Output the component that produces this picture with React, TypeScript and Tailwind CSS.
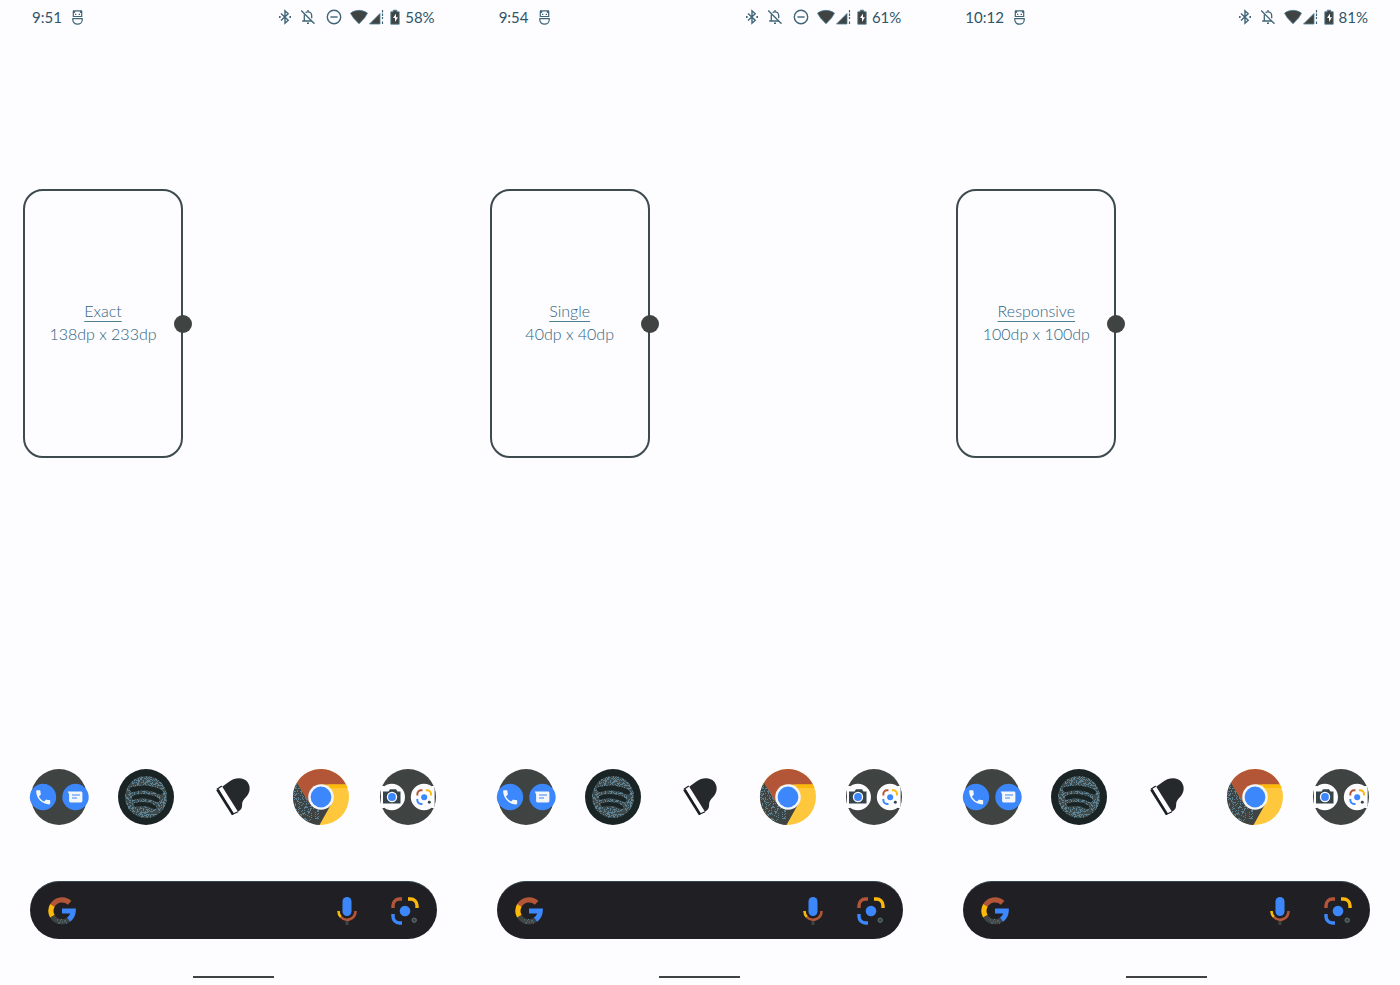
import React from "react";

type Phone = { time: string; battery: string; dnd: boolean; mode: string; size: string };

const phones: Phone[] = [
  { time: "9:51", battery: "58%", dnd: true, mode: "Exact", size: "138dp x 233dp" },
  { time: "9:54", battery: "61%", dnd: true, mode: "Single", size: "40dp x 40dp" },
  { time: "10:12", battery: "81%", dnd: false, mode: "Responsive", size: "100dp x 100dp" },
];

const inkBlue = "#4f7f95";
const ink = "#3f4341";

/* Speckle of single-unit squares inside a box, the same on every render. */
function speckle(x: number, y: number, w: number, h: number, density: number) {
  let seed = 7;
  let d = "";
  for (let j = 0; j < h; j++) {
    for (let i = 0; i < w; i++) {
      seed = (seed * 1103515245 + 12345) % 2147483648;
      if (seed / 2147483648 < density) d += `M${x + i} ${y + j}h1v1h-1z`;
    }
  }
  return d;
}
const spotifyGrain = speckle(7, 7, 42, 42, 0.4);
const chromeGrain = speckle(0, 14, 26, 38, 0.25);

function AndroidIcon() {
  return (
    <svg className="h-[15px] w-[11px]" viewBox="0 0 11 15" fill="none" stroke="#3f6577" strokeWidth="1.2" aria-hidden="true">
      <path d="M1 .8h9M1.300 1V6.500h8.400V1M1.500 1l1.500 1.500M9.500 1L8 2.500" />
      <path d="M3 4.300h1.300M6.700 4.300H8" />
      <path d="M.8 8.700h9.400v1.400a4.700 4.100 0 0 1-9.400 0z" />
    </svg>
  );
}

function BluetoothIcon() {
  return (
    <svg className="h-4 w-3.5" viewBox="0 0 14 16" fill="none" stroke="#3f6577" strokeWidth="1.4" aria-hidden="true">
      <path d="M3 4.500l7.200 6.800L7 14.200V1.800l3.200 2.900L3 11.500" />
      <path d="M1 8h1.600M11.400 8H13" strokeWidth="1.800" />
    </svg>
  );
}

function BellOffIcon() {
  return (
    <svg className="size-4" viewBox="0 0 16 16" fill="none" stroke="#3f6577" strokeWidth="1.3" aria-hidden="true">
      <path d="M1.200 1.500l13.300 13.300" />
      <path d="M4.300 5.600V11.800M2.200 12h9.600" />
      <path d="M5.600 3.600c1-.9 1.600-.8 2.400-.8 2.300 0 3.700 1.700 3.700 3.900v2.600M8 1v2" />
      <path d="M7 14.300h2" strokeWidth="1.600" />
    </svg>
  );
}

function DndIcon() {
  return (
    <svg className="size-4" viewBox="0 0 16 16" fill="none" stroke="#3f6577" strokeWidth="1.4" aria-hidden="true">
      <circle cx="8" cy="8" r="6.700" />
      <path d="M4.400 8h7.200" />
    </svg>
  );
}

function SignalIcons() {
  return (
    <svg className="h-4 w-[50px]" viewBox="0 0 50 16" fill={ink} stroke={inkBlue} strokeWidth=".8" aria-hidden="true">
      <path d="M.5 4.200C5.500.4 12.500.4 17.500 4.200L14.500 9 9 14.800 3.500 9z" />
      <path d="M19.500 15L30 4.500V15z" />
      <path d="M32.500 1v9M32.500 12.500v2.500" stroke="#3f6577" strokeWidth="1.200" strokeDasharray="2.500 1" />
      <path d="M40.800 2.800h2.400V1.200h3.600v1.600h2.400V15.200h-8.400z" />
      <path d="M46 4.500l-3 4.500h2v4l3-4.800h-2z" fill="#fdfcff" stroke="none" />
    </svg>
  );
}

function StatusBar({ phone }: { phone: Phone }) {
  return (
    <header className="flex h-[34px] items-center justify-between px-8 text-[15px] leading-5 text-[#2f5568]">
      <div className="flex items-center gap-2.5">
        <time>{phone.time}</time>
        <AndroidIcon />
      </div>
      <div className="flex items-center gap-2">
        <BluetoothIcon />
        <BellOffIcon />
        {phone.dnd && <span className="pl-0.5"><DndIcon /></span>}
        <div className="flex items-center gap-[5px]">
          <SignalIcons />
          <span>{phone.battery}</span>
        </div>
      </div>
    </header>
  );
}

function LensMarks() {
  return (
    <>
      <g fill="none" strokeWidth="3.400">
        <path d="M2 11V8.500A6.500 6.500 0 0 1 8.500 2H11" stroke="#b35638" />
        <path d="M17 2h2.500A6.500 6.500 0 0 1 26 8.500V11" stroke="#fdb90a" />
        <path d="M2 17v2.500A6.500 6.500 0 0 0 8.500 26H11" stroke="#3b87fb" />
      </g>
      <circle cx="14" cy="14" r="5.300" fill="#3b87fb" />
    </>
  );
}

function CommsFolder() {
  return (
    <svg className="h-14 w-[60px]" viewBox="0 0 60 56" aria-hidden="true">
      <circle cx="30" cy="28" r="28" fill={ink} />
      <circle cx="14" cy="28" r="13.200" fill="#3b87fb" />
      <circle cx="46.500" cy="28" r="13.200" fill="#3b87fb" />
      <path
        transform="translate(4.800 19) scale(.78)"
        fill="#f4f6f8"
        d="M6.620 10.790c1.440 2.830 3.760 5.140 6.590 6.590l2.200-2.200c.27-.27.67-.36 1.020-.24 1.120.37 2.330.57 3.570.57.55 0 1 .45 1 1V20c0 .55-.45 1-1 1C10.610 21 3 13.390 3 4c0-.55.45-1 1-1h3.500c.55 0 1 .45 1 1 0 1.250.2 2.450.57 3.570.11.35.03.74-.25 1.020z"
      />
      <path d="M38.800 22.500h13.200a1.400 1.400 0 0 1 1.400 1.400v8.200a1.400 1.400 0 0 1-1.400 1.400H41.500a1.400 1.400 0 0 1-1.400-1.400v-6.600z" fill="#f4f6f8" />
      <path d="M43 26h8M43 29h5" stroke="#3b87fb" strokeWidth="1.100" />
    </svg>
  );
}

function SpotifyLogo() {
  return (
    <svg className="h-14 w-[60px]" viewBox="-2 0 60 56" aria-hidden="true">
      <defs>
        <clipPath id="spotify-disc"><circle cx="28" cy="28" r="21" /></clipPath>
      </defs>
      <circle cx="28" cy="28" r="28" fill="#1a2424" />
      <circle cx="28" cy="28" r="21" fill="#424b4c" />
      <path d={spotifyGrain} fill="#5b8294" clipPath="url(#spotify-disc)" shapeRendering="crispEdges" />
      <g fill="none" stroke="#1a2424" strokeLinecap="round">
        <path d="M14.500 20.500c9-2.500 19.500-1.800 28 2.700" strokeWidth="5" />
        <path d="M16 28.500c8-2.200 16.500-1.300 23.500 2.600" strokeWidth="4.400" />
        <path d="M17.500 35.800c7-1.600 13.500-.8 19 2.400" strokeWidth="3.800" />
      </g>
    </svg>
  );
}

function PianoLogo() {
  return (
    <svg className="h-14 w-[60px]" viewBox="-1 1 60 56" aria-hidden="true">
      <path d="M13 22.500L24 14.500c6-5 15-6 19.500-.5 3.500 5 2.500 10.500-1 14.500-3.200 3.200-4.500 5-4.400 8.500.1 3.700-1.600 6-8.200 8.700z" fill="#25292c" />
      <path d="M14.500 20.800l3.600-2.400L34 43.800l-4 2.600z" fill="#fdfcff" />
      <path d="M13.300 21.500l15.700 25" stroke="#1a2022" strokeWidth="2.600" />
      <path d="M12.800 21.300l5-3.200M28 46.500l6-2.800" stroke="#1a2022" strokeWidth="1.200" />
    </svg>
  );
}

function ChromeLogo() {
  return (
    <svg className="h-14 w-[60px]" viewBox="-3 0 60 56" aria-hidden="true">
      <defs>
        <clipPath id="chrome-green"><path d="M4 13.500A28 28 0 0 0 26.500 56L38.800 34 28 28 15.700 33z" /></clipPath>
      </defs>
      <circle cx="28" cy="28" r="28" fill="#ffc83c" />
      <path d="M28 28L15.700 33 4 13.500A28 28 0 0 1 53 15.500H28z" fill="#b35638" />
      <path d="M4 13.500A28 28 0 0 0 26.500 56L38.800 34 28 28 15.700 33z" fill={ink} />
      <path d={chromeGrain} fill="#5b8294" clipPath="url(#chrome-green)" shapeRendering="crispEdges" />
      <path d="M35 15.500h18l1.600 3.500H37z" fill="#fdb90a" />
      <circle cx="28" cy="28" r="12.800" fill="#f3f5f7" />
      <circle cx="28" cy="28" r="10.400" fill="#3b87fb" />
    </svg>
  );
}

function CameraFolder() {
  return (
    <svg className="h-14 w-[60px]" viewBox="0 0 60 56" aria-hidden="true">
      <defs>
        <clipPath id="camera-folder"><rect x="3" y="0" width="53.500" height="56" /></clipPath>
      </defs>
      <circle cx="30" cy="28" r="28" fill={ink} />
      <g clipPath="url(#camera-folder)">
        <rect x="3" y="17" width="3" height="22" fill="#fdfcff" />
        <rect x="53.500" y="17" width="3" height="22" fill="#fdfcff" />
        <circle cx="13.800" cy="28" r="13.200" fill="#fdfcff" />
        <circle cx="46" cy="28" r="13.200" fill="#fdfcff" />
      </g>
      <path d="M6.500 22.500h4l1.500-2.300h6l1.500 2.300h3v12H5V22.500z" fill="#36444a" />
      <circle cx="14" cy="28" r="5.200" fill="#fdfcff" />
      <circle cx="14" cy="28" r="3.900" fill="#3b87fb" />
      <g transform="translate(38.200 20.200) scale(.57)">
        <LensMarks />
        <circle cx="23" cy="23" r="2.600" fill="#36444a" />
      </g>
    </svg>
  );
}

function GoogleLogo() {
  return (
    <svg className="size-7" viewBox="0 0 28 28" fill="none" strokeWidth="5.200" aria-hidden="true">
      <path d="M4.300 8.600A11.200 11.200 0 0 1 21.600 5.800" stroke="#b35638" />
      <path d="M4.400 19.400A11.200 11.200 0 0 1 4.400 8.400" stroke="#fdb90a" />
      <path d="M4.300 19.200A11.200 11.200 0 0 0 20.500 22.700" stroke={ink} />
      <path d="M14 14h11.200A11.200 11.200 0 0 1 20.500 22.700" stroke="#3b87fb" />
      <path d="M9 23h1M12 24h1M10 26h2M14 25h1M16 24h2M18 26h1M13 22.500h1" stroke="#5b8294" strokeWidth="1" />
    </svg>
  );
}

function MicLogo() {
  return (
    <svg className="h-7 w-5" viewBox="0 0 20 28" fill="none" aria-hidden="true">
      <rect x="5.500" y="0" width="9" height="19" rx="4.500" fill="#3b87fb" />
      <path d="M1.500 14A8.500 8.500 0 0 0 4 20.200" stroke="#fdb90a" strokeWidth="2.600" />
      <path d="M4 20.200A8.500 8.500 0 0 0 18.500 14" stroke="#b35638" strokeWidth="2.600" />
      <path d="M10 24v4.500" stroke={ink} strokeWidth="3" />
    </svg>
  );
}

function LensLogo() {
  return (
    <svg className="size-7" viewBox="0 0 28 28" aria-hidden="true">
      <LensMarks />
      <circle cx="23.200" cy="23.200" r="2.200" fill={ink} stroke="#5b7480" />
    </svg>
  );
}

const apps = [
  { name: "Phone and messages", Icon: CommsFolder },
  { name: "Spotify", Icon: SpotifyLogo },
  { name: "Piano", Icon: PianoLogo },
  { name: "Chrome", Icon: ChromeLogo },
  { name: "Camera and lens", Icon: CameraFolder },
];

function PhoneScreen({ phone }: { phone: Phone }) {
  return (
    <section className="flex flex-col" aria-label={phone.mode}>
      <StatusBar phone={phone} />
      <main className="grow px-[23px] pt-[155px] pb-8">
        <div className="relative flex h-[269px] w-40 flex-col items-center justify-center rounded-[20px] border-2 border-[#3d4a4e] pb-[3px] text-base leading-[23px] font-light text-[#2f6580]">
          <h2 className="underline decoration-[#4f7f95] underline-offset-4">{phone.mode}</h2>
          <p className="whitespace-nowrap">{phone.size}</p>
          <button
            type="button"
            aria-label="Resize widget"
            className="absolute top-1/2 -right-[11px] size-[18px] -translate-y-1/2 rounded-full bg-[#3f4341]"
          />
        </div>
      </main>
      <footer className="flex flex-col items-center pb-[7px]">
        <nav className="flex w-full justify-between px-[29px]" aria-label="Favourite apps">
          {apps.map(({ name, Icon }) => (
            <button key={name} type="button" aria-label={name}>
              <Icon />
            </button>
          ))}
        </nav>
        <div className="w-full px-[30px] pt-14 pb-[37px]">
          <form className="flex h-[58px] items-center rounded-full border-t border-[#33464f] bg-[#201f24] px-[18px]">
            <GoogleLogo />
            <input type="search" aria-label="Search" className="min-w-0 grow bg-transparent px-3 text-white outline-none" />
            <div className="flex items-center gap-[34px]">
              <button type="button" aria-label="Voice search"><MicLogo /></button>
              <button type="button" aria-label="Search with lens"><LensLogo /></button>
            </div>
          </form>
        </div>
        <div className="h-0.5 w-[81px] bg-[#3f4341]" />
      </footer>
    </section>
  );
}

export default function App() {
  return (
    <div className="grid min-h-screen grid-cols-3 bg-[#fdfcff] font-['Lato','Open_Sans',sans-serif]">
      {phones.map((phone) => (
        <PhoneScreen key={phone.mode} phone={phone} />
      ))}
    </div>
  );
}
